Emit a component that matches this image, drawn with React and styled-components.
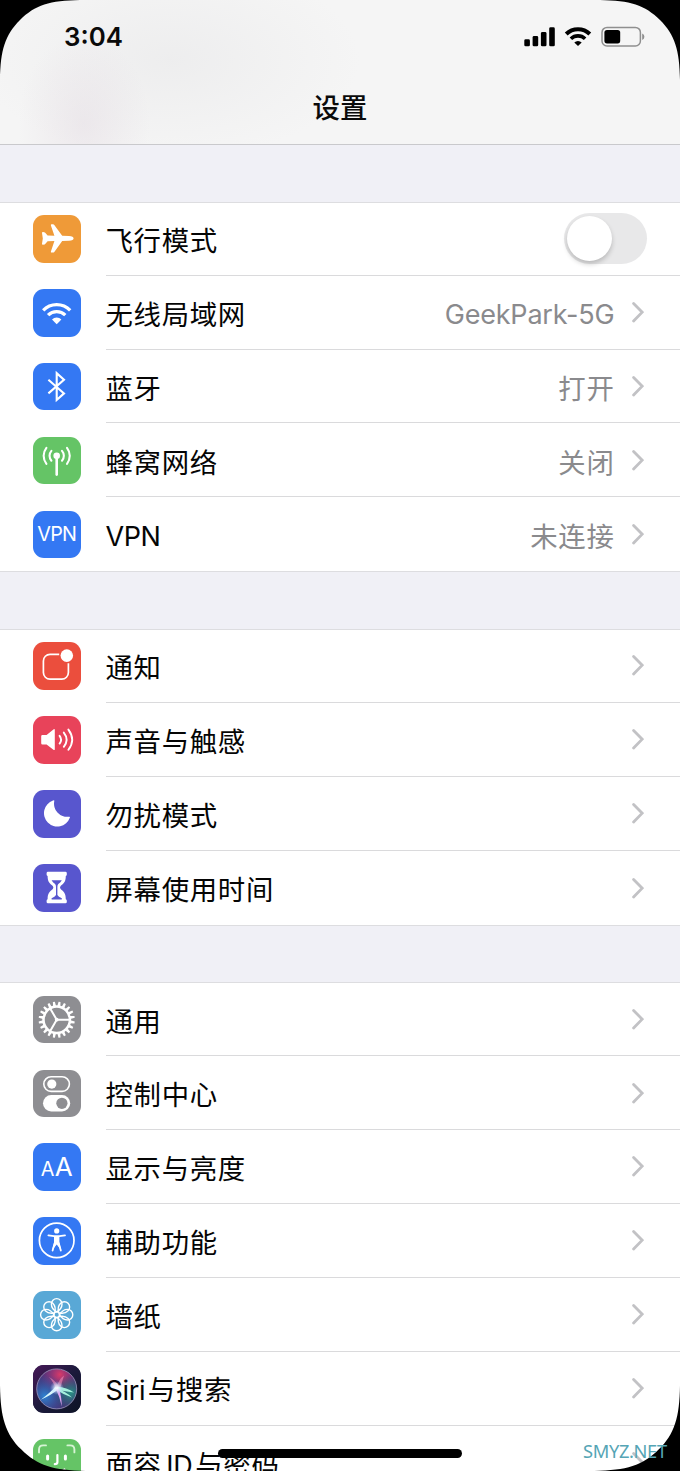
import React from 'react';
import styled, { createGlobalStyle } from 'styled-components';

const GlobalStyle = createGlobalStyle`
  * { box-sizing: border-box; }
  body {
    margin: 0;
    background: #000;
    font-family: Inter, "Noto Sans CJK SC", sans-serif;
  }
`

const Phone = styled.div`
  position: relative;
  width: 680px;
  height: 1471px;
  overflow: hidden;
  background: #f0f0f6;
`

const Header = styled.header`
  display: flex;
  flex-direction: column;
  height: 145px;
  border-bottom: 1px solid #c9c9cc;
  background:
    radial-gradient(ellipse 66px 90px at 84px 124px, rgba(228, 220, 227, 0.5), rgba(232, 224, 230, 0)),
    radial-gradient(ellipse 190px 100px at 170px 60px, rgba(234, 234, 235, 0.7), rgba(238, 238, 239, 0)),
    #f5f5f5;
`

const StatusBar = styled.div`
  display: flex;
  align-items: center;
  justify-content: space-between;
  height: 75px;
  padding: 1px 35px 0 64px;
`

const Time = styled.span`
  font-size: 25.8px;
  font-weight: 600;
  color: #0a0a0a;
`

const Title = styled.h1`
  margin: 0;
  font-size: 27.4px;
  line-height: 72px;
  font-weight: 500;
  text-align: center;
  color: #0a0a0a;
`

const Section = styled.section`
  margin-top: 56.8px;
  border-top: 1px solid #dddde0;
  border-bottom: 1px solid #dddde0;
  background: #fff;
`

const Row = styled.div`
  display: flex;
  height: ${props => props.$first ? 73 : 73.85}px;
  padding: ${props => props.$first ? 0 : 0.85}px 0 0 33px;
`

const Tile = styled.div`
  display: flex;
  align-items: center;
  justify-content: center;
  flex: none;
  width: 47.5px;
  height: 47.5px;
  margin: 12.5px 25px 0 0;
  overflow: hidden;
  border-radius: 11px;
  background: ${props => props.$color};
  color: #fff;
`

const Glyph = styled.svg`
  display: block;
  flex: none;
  width: 47.5px;
  height: 47.5px;
`

const TileText = styled.span`
  font-size: ${props => props.$size}px;
  line-height: 1;
  letter-spacing: ${props => props.$spacing || 0}px;
`

const Letters = styled.div`
  display: flex;
  align-items: baseline;
  gap: 0.5px;
`

const Body = styled.div`
  display: flex;
  flex: 1;
  align-items: center;
  padding-right: ${props => props.$toggle ? 33 : 36}px;
  border-bottom: ${props => props.$last ? 'none' : '1px solid #dadadc'};
`

const Label = styled.span`
  flex: 1;
  padding-top: 4.6px;
  font-size: 27.4px;
  line-height: 40px;
  letter-spacing: 0.7px;
  white-space: nowrap;
  color: #050505;
`

const Value = styled.span`
  padding-top: 4.6px;
  margin-right: 17px;
  font-size: 27.4px;
  line-height: 40px;
  letter-spacing: 0.7px;
  color: #8a8a8d;
`

const Latin = styled.span`
  font-size: 27px;
  letter-spacing: ${props => props.$spacing || 0}px;
  margin: 0 ${props => props.$after || 0}px 0 ${props => props.$before || 0}px;
`

const Track = styled.div`
  display: flex;
  width: 83px;
  height: 51px;
  padding: 3px;
  border-radius: 26px;
  background: #e8e8e9;
`

const Knob = styled.div`
  width: 45px;
  height: 45px;
  border-radius: 50%;
  background: #fff;
  box-shadow: 0 3px 5px rgba(0, 0, 0, 0.2);
`

const StatusIcons = styled.svg`
  display: block;
  width: 122px;
  height: 24px;
`

const Corners = styled.svg`
  position: absolute;
  inset: 0;
  width: 680px;
  height: 1471px;
`

const HomeBar = styled.div`
  position: absolute;
  left: 218px;
  top: 1449px;
  width: 244px;
  height: 9px;
  border-radius: 5px;
  background: #000;
`

const Watermark = styled.span`
  position: absolute;
  left: 583px;
  top: 1438px;
  font-family: "Noto Sans", "Open Sans", sans-serif;
  font-size: 18.3px;
  line-height: 26px;
  letter-spacing: -0.35px;
  color: #55a5b5;
`

const Chevron = () =>
  <svg width="12.5" height="21" viewBox="0 0 12.5 21" fill="none" stroke="#c2c2c5" strokeWidth="2.8">
    <path d="M1.6 1.5 L10.2 10.2 L1.6 18.9" strokeLinecap="round" />
  </svg>

const Plane = () =>
  <Glyph viewBox="0 0 47.5 47.5" fill="#fff">
    <path d="M9 18 Q9 17 10 17.1 L11.2 17.2 Q11.8 17.3 12.2 17.8 L14.6 20.6 L21.4 20.8 L17.9 10.4 Q17.6 9.2 18.7 9.2 L20 9.2 Q20.8 9.2 21.3 9.9 L29.2 20.8 L36 21 Q40.6 21.5 40.6 23.4 Q40.6 25.3 36 25.8 L29.2 26 L21.3 36.9 Q20.8 37.6 20 37.6 L18.7 37.6 Q17.6 37.6 17.9 36.4 L21.4 26 L14.6 26.2 L12.2 29 Q11.8 29.5 11.2 29.6 L10 29.7 Q9 29.8 9 28.8 L9.8 23.4 Z" />
  </Glyph>

const Wifi = () =>
  <Glyph viewBox="0 0 47.5 47.5" fill="none" stroke="#fff" strokeWidth="3.3">
    <path d="M10.2 21.4 A18.8 18.8 0 0 1 37.2 21.4" />
    <path d="M15.1 26.2 A12.2 12.2 0 0 1 32.3 26.2" />
    <path d="M23.7 35.2 L19 30.4 A6.6 6.6 0 0 1 28.4 30.4 Z" fill="#fff" stroke="none" />
  </Glyph>

const Bluetooth = () =>
  <Glyph viewBox="0 0 47.5 47.5" fill="none" stroke="#fff" strokeWidth="2.1">
    <path d="M15.4 16.8 L31 30.4 L23.7 37 V10.2 L31 16.8 L15.4 30.4" />
  </Glyph>

const Antenna = () =>
  <Glyph viewBox="0 0 47.5 47.5" fill="none" stroke="#fff" strokeWidth="2.1" strokeLinecap="round">
    <circle cx="23.7" cy="18.8" r="3.3" fill="#fff" stroke="none" />
    <path d="M23.7 20 V37.6" strokeWidth="2.6" />
    <path d="M18.4 13.9 A7.4 7.4 0 0 0 18.4 23.7 M29 13.9 A7.4 7.4 0 0 1 29 23.7" />
    <path d="M13.4 10.8 A13 13 0 0 0 13.4 26.8 M34 10.8 A13 13 0 0 1 34 26.8" />
  </Glyph>

const Vpn = () => <TileText $size={19.8} $spacing={-0.7}>VPN</TileText>

const Bell = () =>
  <Glyph viewBox="0 0 47.5 47.5" fill="none" stroke="#fff" strokeWidth="1.7">
    <path d="M26.2 12.3 H17 A6.6 6.6 0 0 0 10.4 18.9 V30.6 A6.6 6.6 0 0 0 17 37.2 H28.8 A6.6 6.6 0 0 0 35.4 30.6 V21.2" />
    <circle cx="33.8" cy="13.6" r="6.3" fill="#fff" stroke="none" />
  </Glyph>

const Speaker = () =>
  <Glyph viewBox="0 0 47.5 47.5" fill="none" stroke="#fff" strokeWidth="1.9" strokeLinecap="round">
    <path d="M8.2 20.2 Q8.2 19 9.4 19 H13.6 L20.4 13.4 Q21.8 12.6 21.8 14 V33.2 Q21.8 34.6 20.4 33.8 L13.6 28.4 H9.4 Q8.2 28.4 8.2 27.2 Z" fill="#fff" stroke="none" />
    <path d="M26.6 19.8 Q29.6 23.7 26.6 27.6" />
    <path d="M30.8 16.6 Q36.4 23.7 30.8 30.8" />
    <path d="M35.4 13.6 Q43 23.7 35.4 33.8" />
  </Glyph>

const Moon = () =>
  <Glyph viewBox="0 0 47.5 47.5" fill="#fff">
    <path d="M20 10.6 Q21.4 9.6 21.3 11 A13.2 13.2 0 0 0 35.6 26.8 Q37.5 26.4 36.8 27.7 A13.3 13.3 0 1 1 20 10.6 Z" />
  </Glyph>

const Hourglass = () =>
  <Glyph viewBox="0 0 47.5 47.5" fill="#fff">
    <path d="M15 7.8 H32.4 Q33.8 7.8 33.8 9.2 V10.5 Q33.8 11.8 32.8 12 C32.8 18 30.6 19.5 27.6 22 Q26.4 23.5 27.6 25 C30.6 27.5 32.8 29 32.8 35.2 Q33.8 35.4 33.8 36.7 V38 Q33.8 39.3 32.4 39.3 H15 Q13.6 39.3 13.6 38 V36.7 Q13.6 35.4 14.6 35.2 C14.6 29 16.8 27.5 19.8 25 Q21 23.5 19.8 22 C16.8 19.5 14.6 18 14.6 12 Q13.6 11.8 13.6 10.5 V9.2 Q13.6 7.8 15 7.8 Z" />
    <path d="M18.6 16.3 H28.8 Q27.8 18.2 25.3 20 Q24.4 21 24.4 23 V31 Q25.4 33 28.8 34.2 Q29.2 35.4 28.4 35.4 H19 Q18.2 35.4 18.6 34.2 Q22 33 23 31 V23 Q23 21 22.1 20 Q19.6 18.2 18.6 16.3 Z" fill="#5856ce" />
  </Glyph>

const teeth = Array.from({ length: 20 }, (_, i) => i * 18 + 9)

const Gear = () =>
  <Glyph viewBox="0 0 47.5 47.5" fill="none" stroke="#fff">
    <g transform="translate(23.7 23.7)">
      {teeth.map(a => <path key={a} d="M13.6 -1.5 L18.1 -1 V1 L13.6 1.5 Z" fill="#fff" stroke="none" transform={`rotate(${a})`} />)}
      <circle r="13.2" strokeWidth="2.5" />
      <path d="M0 0 H13 M0 0 L-6.5 -11.3 M0 0 L-6.5 11.3" strokeWidth="2" />
      <circle r="1.9" fill="#fff" stroke="none" />
    </g>
  </Glyph>

const Toggles = () =>
  <Glyph viewBox="0 0 47.5 47.5" fill="none">
    <rect x="10.8" y="6.8" width="25.6" height="14.6" rx="7.3" stroke="#fff" strokeWidth="1.6" />
    <circle cx="18.8" cy="14.1" r="4.6" fill="#fff" />
    <rect x="10" y="25.1" width="27.2" height="16.4" rx="8.2" fill="#fff" />
    <circle cx="28.9" cy="33.3" r="5.6" fill="#8e8e92" />
  </Glyph>

const TextSize = () =>
  <Letters>
    <TileText $size={19.8}>A</TileText>
    <TileText $size={26}>A</TileText>
  </Letters>

const Person = () =>
  <Glyph viewBox="0 0 47.5 47.5" fill="none" stroke="#fff" strokeLinecap="round" strokeLinejoin="round">
    <circle cx="23.7" cy="23.4" r="17.3" strokeWidth="1.7" />
    <circle cx="23.7" cy="13.9" r="2.6" fill="#fff" stroke="none" />
    <path d="M15.4 18.3 L21 19.2 H26.4 L32 18.3" strokeWidth="1.8" />
    <path d="M21 19 H26.4 V26 L28.4 33.6 L23.7 27.6 L19 33.6 L21 26 Z" fill="#fff" stroke="none" />
    <path d="M21.7 26 L19.6 33.6 M25.7 26 L27.8 33.6" strokeWidth="1.8" />
  </Glyph>

const petals = [0, 45, 90, 135, 180, 225, 270, 315]

const Flower = () =>
  <Glyph viewBox="0 0 47.5 47.5" fill="none" stroke="#fff" strokeWidth="1.4">
    <g transform="translate(23.7 23.7)">
      {petals.map(a => <path key={a} d="M0 -2.8 C-4.4 -5.4 -5.3 -8.6 -5.3 -10.8 A5.3 5.3 0 0 1 5.3 -10.8 C5.3 -8.6 4.4 -5.4 0 -2.8 Z" transform={`rotate(${a})`} />)}
      <circle r="2.8" />
    </g>
  </Glyph>

const Siri = () =>
  <Glyph viewBox="0 0 47.5 47.5">
    <defs>
      <linearGradient id="siriBack" x1="0" y1="0" x2="1" y2="1">
        <stop offset="0" stopColor="#471858" />
        <stop offset="0.5" stopColor="#1c1a3c" />
        <stop offset="1" stopColor="#0d1424" />
      </linearGradient>
      <radialGradient id="siriPink" cx="0.58" cy="0.14" r="0.5">
        <stop offset="0" stopColor="#d83a68" />
        <stop offset="1" stopColor="#a02f86" stopOpacity="0" />
      </radialGradient>
      <radialGradient id="siriBlue" cx="0.2" cy="0.68" r="0.55">
        <stop offset="0" stopColor="#2f83d2" />
        <stop offset="1" stopColor="#2a55a0" stopOpacity="0" />
      </radialGradient>
      <radialGradient id="siriTeal" cx="0.85" cy="0.6" r="0.45">
        <stop offset="0" stopColor="#2b9184" />
        <stop offset="1" stopColor="#205a70" stopOpacity="0" />
      </radialGradient>
      <radialGradient id="siriGlow">
        <stop offset="0" stopColor="#fff" />
        <stop offset="0.35" stopColor="#e2f0ff" stopOpacity="0.75" />
        <stop offset="1" stopColor="#9ac6ff" stopOpacity="0" />
      </radialGradient>
    </defs>
    <rect width="47.5" height="47.5" fill="url(#siriBack)" />
    <circle cx="23.7" cy="23.9" r="20" fill="#483478" />
    <circle cx="23.7" cy="23.9" r="20" fill="url(#siriPink)" />
    <circle cx="23.7" cy="23.9" r="20" fill="url(#siriBlue)" />
    <circle cx="23.7" cy="23.9" r="20" fill="url(#siriTeal)" />
    <path d="M22.7 23 Q19 15 16 12 Q22 15 25.6 21.6 Z M23.6 22 Q26 14 31 10.5 Q29 17 27.4 23 Z" fill="#f08ab8" opacity="0.6" />
    <path d="M22.4 21.8 Q18 27 7.8 34.8 Q18.6 30 25 24.6 Z" fill="#d9f8fc" />
    <path d="M24 21.8 Q34 22.4 41 27.4 Q32 26.6 24 24.8 Z M24 23.6 Q33 26.6 39 32.6 Q29.6 29.4 23 24.6 Z" fill="#a5f0dc" />
    <path d="M22.6 23.6 Q26.4 31 28.8 41.4 Q28.6 31 26 23.4 Z" fill="#e2a4f0" />
    <circle cx="23.9" cy="23" r="7" fill="url(#siriGlow)" />
    <circle cx="23.7" cy="23.9" r="20" fill="none" stroke="#a7a2c5" strokeOpacity="0.8" strokeWidth="0.9" />
  </Glyph>

const Face = () =>
  <Glyph viewBox="0 0 47.5 47.5" fill="none" stroke="#fff" strokeWidth="2.2" strokeLinecap="round">
    <path d="M6 13.4 V10.6 Q6 6.4 10.2 6.4 H13 M34.4 6.4 H37.2 Q41.4 6.4 41.4 10.6 V13.4" stroke="#d6f3d4" strokeWidth="1.9" />
    <path d="M14.6 17 V20 M32.4 17 V20" strokeWidth="3" />
    <path d="M24.4 16 V23 Q24.4 25.2 21.8 25.2" />
    <path d="M16 30.5 Q23.7 37.5 31.4 30.5" />
  </Glyph>

const groups = [
  [
    { label: '飞行模式', color: '#ef9a38', icon: Plane, toggle: true },
    { label: '无线局域网', color: '#3478f3', icon: Wifi, value: <Latin $spacing={-0.2}>GeekPark-5G</Latin> },
    { label: '蓝牙', color: '#3478f3', icon: Bluetooth, value: '打开' },
    { label: '蜂窝网络', color: '#65c466', icon: Antenna, value: '关闭' },
    { label: <Latin $spacing={-0.4}>VPN</Latin>, color: '#3478f3', icon: Vpn, value: '未连接' },
  ],
  [
    { label: '通知', color: '#eb4e3d', icon: Bell },
    { label: '声音与触感', color: '#e8435a', icon: Speaker },
    { label: '勿扰模式', color: '#5856ce', icon: Moon },
    { label: '屏幕使用时间', color: '#5856ce', icon: Hourglass },
  ],
  [
    { label: '通用', color: '#8e8e92', icon: Gear },
    { label: '控制中心', color: '#8e8e92', icon: Toggles },
    { label: '显示与亮度', color: '#3478f3', icon: TextSize },
    { label: '辅助功能', color: '#3478f3', icon: Person },
    { label: '墙纸', color: '#59a8d6', icon: Flower },
    { label: <><Latin $spacing={-0.3} $after={2.5}>Siri</Latin>与搜索</>, color: '#1c1a3c', icon: Siri },
    { label: <>面容<Latin $spacing={-0.1} $before={4.5} $after={2.5}>ID</Latin>与密码</>, color: '#65c466', icon: Face },
  ],
]

const SettingsRow = ({ item, first, last }) => {
  const Icon = item.icon
  return (
    <Row $first={first}>
      <Tile $color={item.color}><Icon /></Tile>
      <Body $last={last} $toggle={item.toggle}>
        <Label>{item.label}</Label>
        {item.value && <Value>{item.value}</Value>}
        {item.toggle ? <Track><Knob /></Track> : <Chevron />}
      </Body>
    </Row>
  )
}

const Status = () =>
  <StatusIcons viewBox="0 0 122 24" fill="#000">
    <rect x="1.3" y="14.3" width="5.6" height="7" rx="1.4" />
    <rect x="9.6" y="11" width="5.6" height="10.3" rx="1.4" />
    <rect x="17.9" y="7" width="5.6" height="14.3" rx="1.4" />
    <rect x="26.2" y="2.3" width="5.6" height="19" rx="1.4" />
    <g fill="none" stroke="#000" strokeWidth="4">
      <path d="M43.2 9 A16.8 16.8 0 0 1 66.8 9" />
      <path d="M47.9 13.8 A10.2 10.2 0 0 1 62.1 13.8" strokeWidth="3.6" />
    </g>
    <path d="M55 21 L51.3 17.4 A5.3 5.3 0 0 1 58.7 17.4 Z" />
    <rect x="79" y="2.4" width="38.4" height="18.6" rx="5" fill="none" stroke="#8f8f8f" strokeWidth="1.5" />
    <rect x="81.4" y="5" width="15.8" height="13.4" rx="2.6" />
    <path d="M119.2 8.4 Q121.4 9.4 121.4 11.7 Q121.4 14 119.2 15 Z" fill="#8f8f8f" />
  </StatusIcons>

const corner = 'M0 0 H80 C50 0.5 35 5 20 20 C5 35 0.5 50 0 80 Z'

export default () =>
  <>
    <GlobalStyle />
    <Phone>
      <Header>
        <StatusBar>
          <Time>3:04</Time>
          <Status />
        </StatusBar>
        <Title>设置</Title>
      </Header>
      {groups.map((rows, i) =>
        <Section key={i}>
          {rows.map((item, j) =>
            <SettingsRow key={j} item={item} first={j === 0} last={j === rows.length - 1} />
          )}
        </Section>
      )}
      <HomeBar />
      <Corners viewBox="0 0 680 1471">
        <path d={corner} />
        <path d={corner} transform="translate(680 0) scale(-1 1)" />
        <path d={corner} transform="translate(0 1471) scale(1.07 -1.07)" />
        <path d={corner} transform="translate(680 1471) scale(-1.07 -1.07)" />
      </Corners>
      <Watermark>SMYZ.NET</Watermark>
    </Phone>
  </>
